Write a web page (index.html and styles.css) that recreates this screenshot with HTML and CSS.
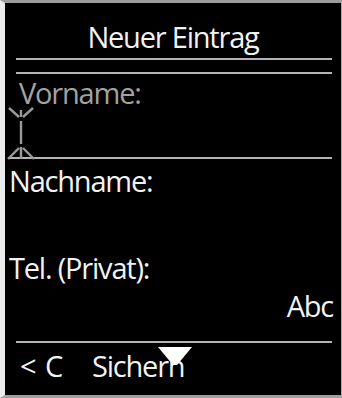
FILE: index.html
```html
<!DOCTYPE html>
<html lang="de">
<head>
<meta charset="utf-8">
<title>Neuer Eintrag</title>
<link rel="stylesheet" href="styles.css">
</head>
<body>
<div class="screen">
  <div class="title">Neuer Eintrag</div>
  <div class="rule rule-top"></div>
  <div class="rule rule-second"></div>
  <div class="label label-first">Vorname:</div>
  <div class="field">
    <svg class="cursor" width="30" height="50" viewBox="0 0 30 50">
      <g stroke="#9a9a9a" stroke-width="2.4" fill="none" stroke-linecap="butt">
        <line x1="3" y1="1" x2="13" y2="10"/>
        <line x1="27" y1="1" x2="17" y2="10"/>
        <line x1="15" y1="3" x2="15" y2="10"/>
        <line x1="15" y1="14" x2="15" y2="37"/>
        <line x1="15" y1="40" x2="15" y2="52"/>
        <line x1="13" y1="41" x2="2" y2="52"/>
        <line x1="17" y1="41" x2="28" y2="52"/>
      </g>
    </svg>
  </div>
  <div class="rule rule-field"></div>
  <div class="label label-name">Nachname:</div>
  <div class="label label-tel">Tel. (Privat):</div>
  <div class="label mode">Abc</div>
  <div class="rule rule-bottom"></div>
  <div class="footer">
    <span class="back">&lt;</span>
    <span class="clear">C</span>
    <span class="save">Sichern</span>
    <svg class="arrow" width="34" height="20" viewBox="0 0 34 20">
      <polygon points="0,0 34,0 19,18 15,18" fill="#ffffff"/>
    </svg>
  </div>
</div>
</body>
</html>
```

FILE: styles.css
```css
html, body {
  margin: 0;
  padding: 0;
  background: #d4d4d4;
}

.screen {
  width: 336px;
  height: 392px;
  background: #000;
  border-style: solid;
  border-color: #9c9c9c #a8a8a8 #a0a0a0 #ececec;
  border-width: 3px 1px 3px 5px;
  font-family: "Open Sans", "DejaVu Sans", sans-serif;
  color: #f2f2f2;
  overflow: hidden;
}

.title {
  padding-top: 16px;
  height: 36px;
  line-height: 36px;
  font-size: 29px;
  letter-spacing: -1.2px;
  text-align: center;
}

.rule {
  height: 2px;
  background: #b4b4b4;
  margin-right: 9px;
  margin-left: 11px;
}

.rule-top { margin-top: 3px; }
.rule-second { margin-top: 12px; }

.label {
  font-size: 29px;
  letter-spacing: -1.2px;
  height: 28px;
  line-height: 28px;
  padding-left: 4px;
  white-space: nowrap;
}

.label-first {
  margin-top: 5px;
  padding-left: 14px;
  color: #a2a2a2;
}

.field {
  height: 50px;
  display: flex;
  align-items: flex-start;
  padding-left: 1px;
}

.cursor {
  display: block;
  overflow: visible;
}

.rule-field {
  margin-left: 3px;
}

.label-name { margin-top: 8px; }
.label-tel { margin-top: 59px; }

.mode {
  margin-top: 10px;
  text-align: right;
  padding-right: 8px;
}

.rule-bottom { margin-top: 21px; }

.footer {
  position: relative;
  margin-top: 9px;
  height: 28px;
  line-height: 28px;
  font-size: 29px;
  letter-spacing: -1.2px;
  display: flex;
  padding-left: 15px;
  white-space: nowrap;
}

.back { width: 25px; }
.clear { width: 47px; }

.arrow {
  position: absolute;
  left: 153px;
  top: -5px;
}
```
